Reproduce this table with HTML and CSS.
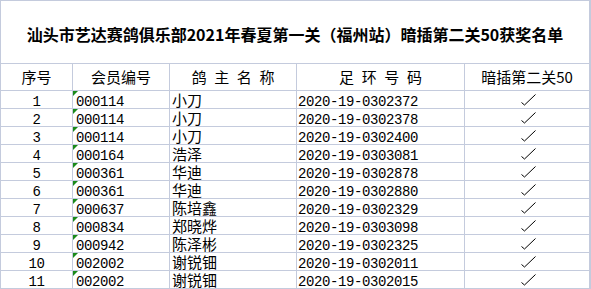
FILE: index.html
```html
<!DOCTYPE html>
<html lang="zh-CN">
<head>
<meta charset="utf-8">
<title>获奖名单</title>
<link rel="stylesheet" href="styles.css">
</head>
<body>
<div class="sheet">
  <div class="c title">汕头市艺达赛鸽俱乐部2021年春夏第一关（福州站）暗插第二关50获奖名单</div>

  <div class="c hd">序号</div>
  <div class="c hd">会员编号</div>
  <div class="c hd spaced">鸽 主 名 称</div>
  <div class="c hd spaced">足 环 号 码</div>
  <div class="c hd">暗插第二关50</div>

  <div class="c num">1</div><div class="c code">000114</div><div class="c name">小刀</div><div class="c ring">2020-19-0302372</div><div class="c ok"><svg class="tick" viewBox="0 0 16 12" width="16" height="12"><polyline points="1.5,8.5 4.5,11 15.5,0.5"/></svg></div>
  <div class="c num">2</div><div class="c code">000114</div><div class="c name">小刀</div><div class="c ring">2020-19-0302378</div><div class="c ok"><svg class="tick" viewBox="0 0 16 12" width="16" height="12"><polyline points="1.5,8.5 4.5,11 15.5,0.5"/></svg></div>
  <div class="c num">3</div><div class="c code">000114</div><div class="c name">小刀</div><div class="c ring">2020-19-0302400</div><div class="c ok"><svg class="tick" viewBox="0 0 16 12" width="16" height="12"><polyline points="1.5,8.5 4.5,11 15.5,0.5"/></svg></div>
  <div class="c num">4</div><div class="c code">000164</div><div class="c name">浩泽</div><div class="c ring">2020-19-0303081</div><div class="c ok"><svg class="tick" viewBox="0 0 16 12" width="16" height="12"><polyline points="1.5,8.5 4.5,11 15.5,0.5"/></svg></div>
  <div class="c num">5</div><div class="c code">000361</div><div class="c name">华迪</div><div class="c ring">2020-19-0302878</div><div class="c ok"><svg class="tick" viewBox="0 0 16 12" width="16" height="12"><polyline points="1.5,8.5 4.5,11 15.5,0.5"/></svg></div>
  <div class="c num">6</div><div class="c code">000361</div><div class="c name">华迪</div><div class="c ring">2020-19-0302880</div><div class="c ok"><svg class="tick" viewBox="0 0 16 12" width="16" height="12"><polyline points="1.5,8.5 4.5,11 15.5,0.5"/></svg></div>
  <div class="c num">7</div><div class="c code">000637</div><div class="c name">陈培鑫</div><div class="c ring">2020-19-0302329</div><div class="c ok"><svg class="tick" viewBox="0 0 16 12" width="16" height="12"><polyline points="1.5,8.5 4.5,11 15.5,0.5"/></svg></div>
  <div class="c num">8</div><div class="c code">000834</div><div class="c name">郑晓烨</div><div class="c ring">2020-19-0303098</div><div class="c ok"><svg class="tick" viewBox="0 0 16 12" width="16" height="12"><polyline points="1.5,8.5 4.5,11 15.5,0.5"/></svg></div>
  <div class="c num">9</div><div class="c code">000942</div><div class="c name">陈泽彬</div><div class="c ring">2020-19-0302325</div><div class="c ok"><svg class="tick" viewBox="0 0 16 12" width="16" height="12"><polyline points="1.5,8.5 4.5,11 15.5,0.5"/></svg></div>
  <div class="c num">10</div><div class="c code">002002</div><div class="c name">谢锐钿</div><div class="c ring">2020-19-0302011</div><div class="c ok"><svg class="tick" viewBox="0 0 16 12" width="16" height="12"><polyline points="1.5,8.5 4.5,11 15.5,0.5"/></svg></div>
  <div class="c num">11</div><div class="c code">002002</div><div class="c name">谢锐钿</div><div class="c ring">2020-19-0302015</div><div class="c ok"><svg class="tick" viewBox="0 0 16 12" width="16" height="12"><polyline points="1.5,8.5 4.5,11 15.5,0.5"/></svg></div>
</div>
</body>
</html>
```
FILE: styles.css
```css
html, body {
  margin: 0;
  padding: 0;
  background: #fff;
}

.sheet {
  display: grid;
  grid-template-columns: 71px 96px 126px 167px 124px;
  grid-template-rows: 62px 26px repeat(11, 17px);
  gap: 1px;
  padding: 1px 2px 1px 1px;
  background: #c4cbdd;
  width: max-content;
  color: #000;
  font-family: "Noto Sans CJK SC", sans-serif;
  font-size: 15px;
}

.c {
  background: #fff;
  white-space: nowrap;
  overflow: visible;
  min-width: 0;
}

.title {
  grid-column: 1 / -1;
  display: flex;
  align-items: center;
  justify-content: center;
  padding-top: 3px;
  font-size: 16px;
  font-weight: 700;
}

.hd {
  text-align: center;
  line-height: 26px;
}

.spaced {
  word-spacing: 4.3px;
}

.num, .code, .ring {
  font-family: "Liberation Mono", monospace;
  font-size: 14px;
  letter-spacing: -0.4px;
  line-height: 17px;
  padding-top: 3px;
  height: 17px;
  box-sizing: border-box;
}

.num {
  text-align: center;
}

.code {
  position: relative;
  padding-left: 3px;
}

.code::before {
  content: "";
  position: absolute;
  left: 0;
  top: 0;
  width: 0;
  height: 0;
  border-top: 5px solid #1a8a1a;
  border-right: 5px solid transparent;
}

.ring {
  padding-left: 1px;
}

.name {
  padding-left: 2px;
  line-height: 17px;
}

.ok {
  display: flex;
  justify-content: center;
  align-items: flex-start;
  padding-top: 3px;
  box-sizing: border-box;
}

.tick {
  display: block;
  margin-left: 1px;
}

.tick polyline {
  fill: none;
  stroke: #000;
  stroke-width: 1;
}
```
